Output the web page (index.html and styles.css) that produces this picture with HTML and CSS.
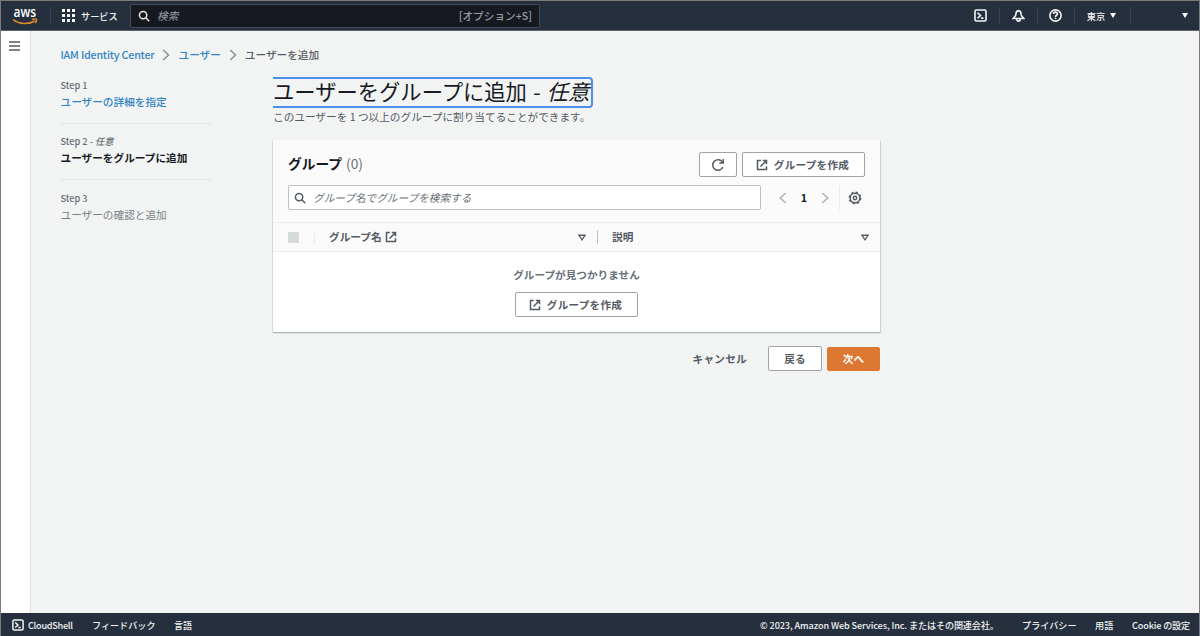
FILE: index.html
```html
<!DOCTYPE html>
<html lang="ja">
<head>
  <meta charset="UTF-8" />
  <meta name="viewport" content="width=device-width, initial-scale=1.0"/>
  <title>IAM Identity Center - ユーザーを追加</title>
  <link rel="stylesheet" href="styles.css">
</head>
<body>
  <!-- Shared icons -->
  <svg class="sprite" width="0" height="0">
    <symbol id="external" viewBox="0 0 16 16">
      <path d="M6.500 2H2v12h12V9.500M9 2h5v5M14 2L6 10" />
    </symbol>
    <symbol id="search" viewBox="0 0 16 16">
      <circle cx="6.8" cy="6.8" r="4.9" />
      <path d="M10.4 10.4L15 15" />
    </symbol>
    <symbol id="shell" viewBox="0 0 16 16">
      <rect x="1.2" y="1.2" width="13.6" height="13.6" rx="2" />
      <path d="M4.3 4.6L8 8l-3.7 3.4M8.6 11.2h3" />
    </symbol>
    <symbol id="caret" viewBox="0 0 10 8">
      <path d="M1.2 1.2h7.6L5 6.8z" />
    </symbol>
  </svg>

  <div class="window">
    <header class="topbar">
      <svg class="aws-logo" viewBox="0 0 26 22">
        <text x="1.500" y="12" textLength="22.500" lengthAdjust="spacingAndGlyphs">aws</text>
        <path d="M1.2 14.600C7.5 19.500 17 19.500 22.600 16" />
        <path d="M20 14.400c2.400-.8 4.600-.6 4.600.1s-.5 2.400-1.600 3.300" />
      </svg>
      <a class="services" href="#">
        <svg class="grid-icon" viewBox="0 0 13 13">
          <path d="M0 0h3v3H0zM5 0h3v3H5zM10 0h3v3h-3zM0 5h3v3H0zM5 5h3v3H5zM10 5h3v3h-3zM0 10h3v3H0zM5 10h3v3H5zM10 10h3v3h-3z" />
        </svg>
        サービス
      </a>
      <div class="global-search">
        <svg class="icon"><use href="#search" /></svg>
        <em>検索</em>
        <span class="shortcut">[オプション+S]</span>
      </div>
      <div class="tools">
        <a class="tool" href="#"><svg class="icon shell"><use href="#shell" /></svg></a>
        <a class="tool" href="#">
          <svg class="icon" viewBox="0 0 16 16">
            <path d="M8 .8v1.500M8 2.300C5.600 2.300 4.900 4.200 4.900 6.200c0 2.600-1.600 3.600-3.600 5.500h13.400c-2-1.900-3.600-2.900-3.600-5.500 0-2-.7-3.900-3.100-3.900zM5.800 12.200c0 3.600 4.400 3.600 4.400 0" />
          </svg>
        </a>
        <a class="tool" href="#">
          <svg class="icon" viewBox="0 0 16 16">
            <circle cx="8" cy="8" r="6.9" />
            <path d="M5.6 6.2c0-3.3 4.8-3.1 4.8-.2C10.4 7.8 8 7.600 8 9.700M8 10.800v1.500" />
          </svg>
        </a>
        <a class="tool region" href="#">東京 <i class="arrow"></i></a>
        <a class="tool account" href="#"><i class="arrow"></i></a>
      </div>
    </header>

    <div class="layout">
      <nav class="sidenav">
        <svg viewBox="0 0 11 10"><path d="M0 1h11M0 5h11M0 9h11" /></svg>
      </nav>

      <main class="content">
        <div class="breadcrumbs">
          <a class="service-name" href="#">IAM Identity Center</a>
          <svg viewBox="0 0 8 12"><path d="M1.2 1l5.300 5-5.300 5" /></svg>
          <a href="#">ユーザー</a>
          <svg viewBox="0 0 8 12"><path d="M1.2 1l5.300 5-5.300 5" /></svg>
          <span>ユーザーを追加</span>
        </div>

        <div class="wizard">
          <ul class="steps">
            <li>
              <small>Step 1</small>
              <a href="#">ユーザーの詳細を指定</a>
            </li>
            <li class="active">
              <small>Step 2 - <em>任意</em></small>
              <b>ユーザーをグループに追加</b>
            </li>
            <li>
              <small>Step 3</small>
              <span>ユーザーの確認と追加</span>
            </li>
          </ul>

          <div class="form">
            <h1>ユーザーをグループに追加 - <em>任意</em></h1>
            <p class="description">このユーザーを 1 つ以上のグループに割り当てることができます。</p>

            <section class="card">
              <div class="card-header">
                <div class="title-row">
                  <h2>グループ <span>(0)</span></h2>
                  <button class="btn refresh">
                    <svg class="icon" viewBox="0 0 16 16"><path d="M13.600 10.200A6 6 0 1 1 13.300 5.200M14 1.200v4.500H9.500" /></svg>
                  </button>
                  <button class="btn create"><svg class="icon"><use href="#external" /></svg>グループを作成</button>
                </div>
                <div class="filter-row">
                  <div class="filter">
                    <svg class="icon"><use href="#search" /></svg>
                    <em>グループ名でグループを検索する</em>
                  </div>
                  <div class="pagination">
                    <svg viewBox="0 0 8 12"><path d="M6.800 1L1.200 6l5.600 5" /></svg>
                    <b>1</b>
                    <svg viewBox="0 0 8 12"><path d="M1.200 1l5.600 5-5.600 5" /></svg>
                  </div>
                  <div class="settings">
                    <svg class="icon" viewBox="0 0 16 16">
                      <circle class="teeth" cx="8" cy="8" r="6.600" />
                      <circle cx="8" cy="8" r="5.500" />
                      <circle cx="8" cy="8" r="1.900" />
                    </svg>
                  </div>
                </div>
              </div>

              <div class="table-head">
                <span class="checkbox"></span>
                <div class="column name">
                  グループ名<svg class="icon"><use href="#external" /></svg>
                  <svg class="caret"><use href="#caret" /></svg>
                </div>
                <div class="column detail">
                  説明
                  <svg class="caret"><use href="#caret" /></svg>
                </div>
              </div>

              <div class="empty">
                <b>グループが見つかりません</b>
                <button class="btn create"><svg class="icon"><use href="#external" /></svg>グループを作成</button>
              </div>
            </section>

            <div class="actions">
              <a href="#">キャンセル</a>
              <button class="btn back">戻る</button>
              <button class="btn primary">次へ</button>
            </div>
          </div>
        </div>
      </main>
    </div>

    <footer class="bottombar">
      <a class="cloudshell" href="#"><svg class="icon"><use href="#shell" /></svg>CloudShell</a>
      <a class="feedback" href="#">フィードバック</a>
      <a href="#">言語</a>
      <span class="copyright">© 2023, Amazon Web Services, Inc. またはその関連会社。</span>
      <a class="privacy" href="#">プライバシー</a>
      <a class="terms" href="#">用語</a>
      <a class="cookie" href="#">Cookie の設定</a>
    </footer>
  </div>
</body>
</html>
```
FILE: styles.css
```css
* {
  box-sizing: border-box;
}

body {
  margin: 0;
  font-family: "Noto Sans CJK JP", sans-serif;
  font-size: 10.65px;
  line-height: 16px;
  color: #545b64;
  background: #f2f3f3;
}

a {
  color: #3184c2;
  text-decoration: none;
}

h1, h2, p, ul {
  margin: 0;
  padding: 0;
  list-style: none;
}

svg {
  flex: none;
  fill: none;
  stroke: currentColor;
  stroke-width: 1.6;
}

.sprite {
  position: absolute;
}

.icon {
  width: 12px;
  height: 12px;
  stroke-width: 2;
}

.window {
  display: flex;
  flex-direction: column;
  height: 636px;
  border: 1px solid #7b7b7b;
  border-bottom: 0;
  overflow: hidden;
}

/* Top bar */
.topbar {
  display: flex;
  align-items: center;
  height: 30px;
  flex: none;
  padding-left: 11px;
  background: #252f3e;
  border-bottom: 1px solid #5b6470;
  color: #fff;
}

.topbar a,
.bottombar a {
  color: #f2f3f3;
}

.aws-logo {
  width: 26px;
  height: 22px;
  stroke: #e38b2c;
  stroke-width: 1.5;
}

.aws-logo text {
  font: 600 13.5px "Open Sans", sans-serif;
  fill: #fff;
  stroke: none;
}

.services {
  display: flex;
  align-items: center;
  gap: 6px;
  height: 17px;
  width: 80px;
  margin-left: 12px;
  padding-left: 11px;
  border-left: 1px solid #3a4350;
  font-size: 9.2px;
  font-weight: 500;
  white-space: nowrap;
}

.grid-icon {
  width: 13px;
  height: 13px;
  fill: #fff;
  stroke: none;
}

.global-search {
  display: flex;
  align-items: center;
  width: 410px;
  height: 24px;
  padding: 0 7px;
  background: #16191f;
  border: 1px solid #444b53;
  border-radius: 2px;
  color: #95a0a2;
}

.global-search .icon {
  color: #e2e4e5;
  margin-right: 7px;
}

.shortcut {
  margin-left: auto;
  font-weight: 500;
}

.tools {
  display: flex;
  margin-left: auto;
}

.tool {
  display: flex;
  align-items: center;
  justify-content: center;
  width: 37.5px;
  height: 17px;
  border-right: 1px solid #3a4350;
}

.tool .icon {
  width: 13px;
  height: 13px;
}

.region {
  width: 56px;
  gap: 5px;
  padding-right: 2px;
  font-size: 9.2px;
  font-weight: 500;
}

.account {
  width: 68px;
  justify-content: flex-end;
  padding-right: 11px;
  border: 0;
}

.arrow {
  border: 3px solid transparent;
  border-top: 5px solid #fff;
  border-bottom: 0;
}

/* Page */
.layout {
  display: flex;
  flex: 1;
}

.sidenav {
  width: 30px;
  padding: 10px 0 0 8px;
  background: #fff;
  border-right: 1px solid #dfe1e1;
}

.sidenav svg {
  display: block;
  width: 11px;
  height: 10px;
  stroke-width: 1.5;
}

.content {
  padding: 16px 0 0 29px;
}

.breadcrumbs {
  display: flex;
  align-items: center;
  gap: 8px;
  padding-left: 0.5px;
  font-weight: 500;
}

.service-name {
  letter-spacing: -0.18px;
}

.breadcrumbs svg {
  width: 8px;
  height: 12px;
  color: #879596;
}

.wizard {
  display: flex;
}

.steps {
  width: 152px;
  margin-right: 61px;
  padding-top: 14px;
}

.steps li {
  height: 56.500px;
}

.steps li + li {
  border-top: 1px solid #e4e7e7;
  padding-top: 9.500px;
}

.steps li:first-child {
  height: 45.500px;
}

.steps small {
  display: block;
  font-size: 9.200px;
  line-height: 16px;
  font-weight: 500;
  color: #687078;
}

.steps a,
.steps b,
.steps span {
  display: block;
  line-height: 18px;
}

.steps small,
.steps a,
.steps b,
.steps span {
  padding-left: 0.500px;
}

.steps a {
  font-weight: 500;
}

.steps span {
  color: #7a8288;
}

.steps .active b {
  color: #16191f;
}

.form {
  width: 607px;
}

h1 {
  width: 320px;
  height: 31px;
  margin-top: 14px;
  border: 2px solid #4d90f0;
  border-left: 0;
  border-radius: 0 4px 4px 0;
  font-size: 21.300px;
  font-weight: 400;
  line-height: 24px;
  word-spacing: 1.500px;
  color: #16191f;
  white-space: nowrap;
}

.description {
  line-height: 18px;
}

.card {
  margin-top: 14px;
  background: #fff;
  box-shadow: 0 1px 1px #aab3b5, -1px 0 1px #e0e3e3, 1px 1px 1px #d5dbdb;
}

.card-header {
  height: 82px;
  padding: 12px 15px 0;
  background: #fafafa;
}

.title-row,
.filter-row {
  display: flex;
  align-items: center;
}

h2 {
  margin-right: auto;
  padding-bottom: 2px;
  font-size: 13.700px;
  line-height: 23px;
  color: #16191f;
}

h2 span {
  margin-left: 1px;
  font-weight: 400;
  color: #687078;
}

.btn {
  display: flex;
  align-items: center;
  justify-content: center;
  height: 25px;
  padding: 0;
  background: #fff;
  border: 1px solid #9fa3a8;
  border-radius: 2px;
  color: #545b64;
  font-family: inherit;
  font-size: 10.600px;
  font-weight: 700;
  letter-spacing: 0.250px;
}

.refresh {
  width: 38px;
  margin-right: 5px;
}

.refresh .icon {
  width: 14px;
  height: 14px;
  stroke-width: 1.700;
}

.create {
  width: 123px;
  gap: 6px;
  padding-right: 2px;
}

.filter-row {
  margin-top: 8px;
}

.filter {
  display: flex;
  align-items: center;
  width: 473px;
  height: 25px;
  padding-left: 5px;
  background: #fff;
  border: 1px solid #bac1c3;
  border-radius: 2px;
}

.filter em {
  margin-left: 7px;
  color: #687078;
}

.pagination {
  display: flex;
  align-items: center;
  justify-content: space-between;
  width: 50px;
  margin-left: 18px;
  color: #16191f;
}

.pagination svg {
  width: 8px;
  height: 12px;
  color: #aab7b8;
}

.settings {
  display: flex;
  margin-left: 10px;
  padding: 5px 0 5px 8px;
  border-left: 1px solid #eaeded;
}

.settings .icon {
  width: 14px;
  height: 14px;
  stroke-width: 1.700;
}

.teeth {
  stroke-width: 1.500;
  stroke-dasharray: 2.600 2.584;
}

.table-head {
  display: flex;
  align-items: center;
  height: 30px;
  padding: 0 11px 0 15px;
  background: #fafafa;
  border-top: 1px solid #eaeded;
  border-bottom: 1px solid #eaeded;
}

.checkbox {
  width: 11px;
  height: 11px;
  margin-right: 15px;
  background: #d5dbdb;
}

.column {
  display: flex;
  align-items: center;
  height: 14px;
  padding: 0 11px 0 14px;
  border-left: 1px solid #eaeded;
  font-weight: 700;
}

.column .icon {
  margin-left: 3px;
}

.column .caret {
  width: 8px;
  height: 7px;
  margin-left: auto;
}

.column.name {
  width: 283px;
}

.column.detail {
  flex: 1;
  padding-right: 0;
  border-color: #bcc3c5;
}

.empty {
  display: flex;
  flex-direction: column;
  align-items: center;
  gap: 9px;
  height: 80px;
  padding-top: 15px;
}

.empty b {
  color: #687078;
}

.actions {
  display: flex;
  align-items: center;
  justify-content: flex-end;
  margin-top: 14px;
}

.actions a {
  margin-right: 21px;
  color: #545b64;
  font-weight: 700;
  letter-spacing: 0.250px;
}

.actions .btn {
  width: 54px;
}

.actions .primary {
  width: 53px;
  height: 24px;
  margin-left: 5px;
  background: #dd7832;
  border-color: #dd7832;
  color: #fff;
}

/* Bottom bar */
.bottombar {
  display: flex;
  align-items: center;
  height: 23px;
  flex: none;
  padding: 0 9px 0 11px;
  background: #252f3e;
  color: #f2f3f3;
  font-size: 9.100px;
  font-weight: 500;
  white-space: nowrap;
}

.cloudshell {
  display: flex;
  align-items: center;
  gap: 4px;
  width: 80px;
  letter-spacing: -0.250px;
}

.feedback {
  width: 82px;
}

.copyright {
  width: 262px;
  margin-left: auto;
  letter-spacing: -0.100px;
}

.privacy {
  width: 73px;
}

.terms {
  width: 37px;
}

.cookie {
  letter-spacing: -0.150px;
}
```
